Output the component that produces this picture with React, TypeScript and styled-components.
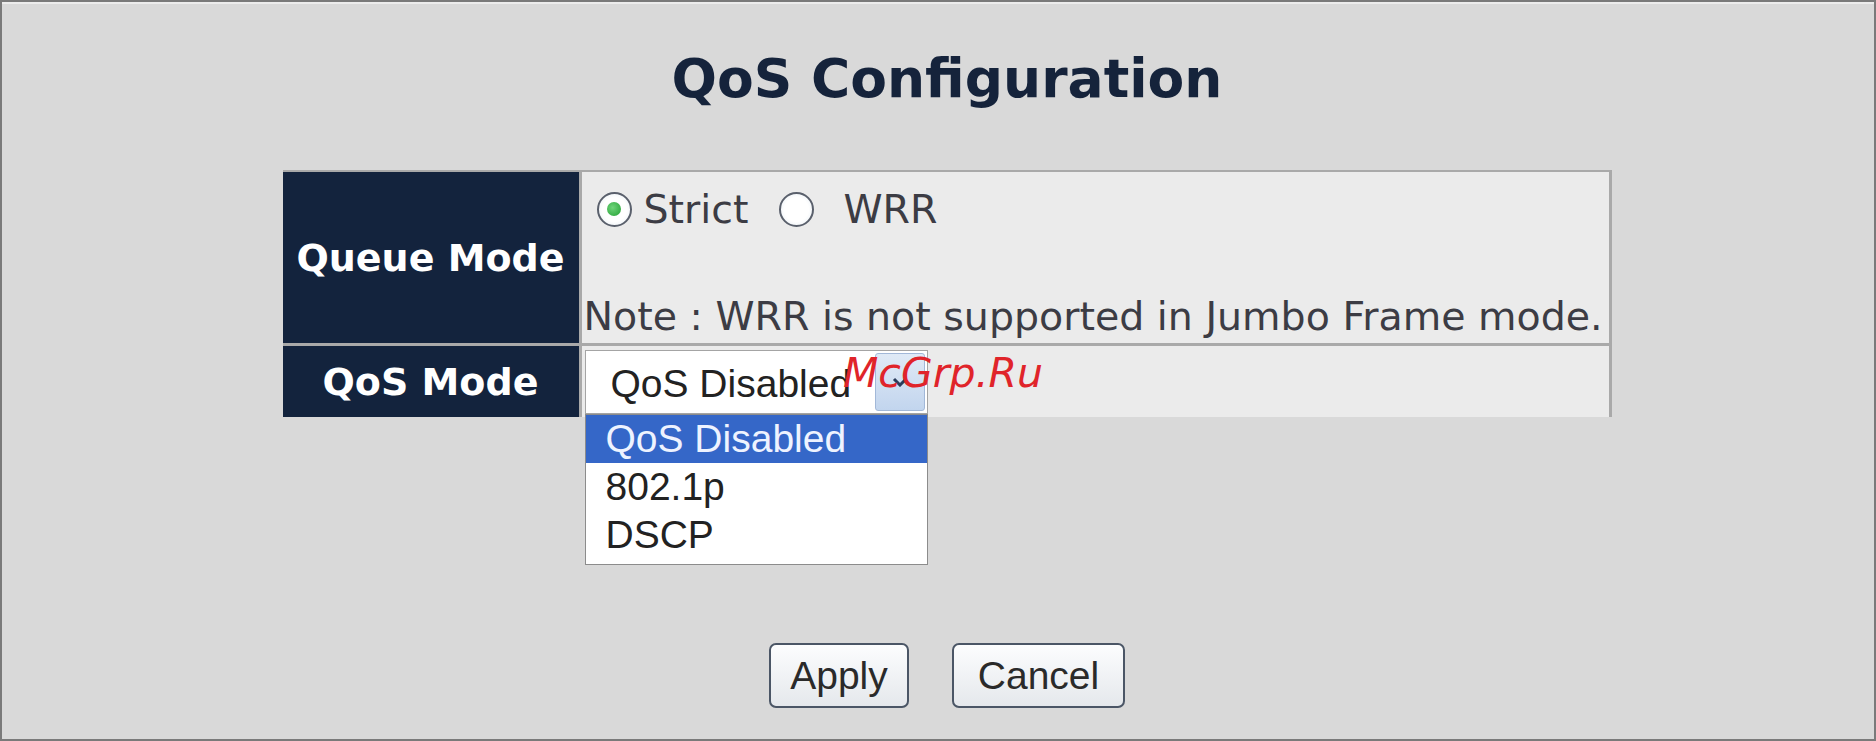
import React from 'react';
import styled, { createGlobalStyle } from 'styled-components';

const GlobalStyle = createGlobalStyle`
  html, body {
    margin: 0;
    padding: 0;
    background: #d9d9d9;
  }
`;

type RadioProps = { checked?: boolean };

const Page = styled.div`
  position: relative;
  box-sizing: border-box;
  width: 1876px;
  height: 741px;
  border: 2px solid #7a7a7a;
  box-shadow: inset 0 2px 0 #ececec;
  background: #d9d9d9;
  display: flex;
  flex-direction: column;
  align-items: center;
  padding-left: 18px;
`;

const Title = styled.h1`
  margin: 47px 0 0;
  font-family: 'DejaVu Sans', Verdana, sans-serif;
  font-weight: bold;
  font-size: 53.5px;
  line-height: 60px;
  color: #15233b;
`;

const Table = styled.div`
  margin-top: 61px;
  width: 1329px;
  display: grid;
  grid-template-columns: 296px 1fr;
  grid-template-rows: 171px 71px;
  column-gap: 3px;
  row-gap: 3px;
  padding: 2px 3px 0 0;
  box-sizing: border-box;
  background: #a9a9a9;
`;

const Label = styled.div`
  background: #13233d;
  color: #ffffff;
  font-family: 'DejaVu Sans', Verdana, sans-serif;
  font-weight: bold;
  font-size: 38px;
  display: flex;
  align-items: center;
  justify-content: center;
`;

const Cell = styled.div`
  background: #ebebeb;
  font-family: 'DejaVu Sans', Verdana, sans-serif;
  font-size: 39.5px;
  color: #3c3c44;
  display: flex;
  flex-direction: column;
`;

const ModeCell = styled(Cell)`
  padding: 10px 0 0 2px;
`;

const SelectCell = styled(Cell)`
  padding: 4px 0 0 3px;
`;

const RadioLine = styled.div`
  display: flex;
  align-items: center;
  height: 54px;
  padding-left: 13px;
`;

const Radio = styled.span<RadioProps>`
  box-sizing: border-box;
  width: 35px;
  height: 35px;
  border-radius: 50%;
  border: 2px solid #5a606c;
  background: radial-gradient(circle, #ffffff 55%, #e2eaf1 100%);
  display: flex;
  align-items: center;
  justify-content: center;
  &::after {
    content: '';
    display: ${({ checked }) => (checked ? 'block' : 'none')};
    width: 14px;
    height: 14px;
    border-radius: 50%;
    background: radial-gradient(circle at 40% 40%, #6fd47a, #22a033);
  }
`;

const RadioText = styled.span<{ gap: number; after: number }>`
  margin-left: ${({ gap }) => gap}px;
  margin-right: ${({ after }) => after}px;
  line-height: 54px;
`;

const Note = styled.div`
  margin-top: auto;
  line-height: 54px;
  white-space: nowrap;
`;

const SelectWrap = styled.div`
  position: relative;
  width: 343px;
`;

const SelectBox = styled.div`
  box-sizing: border-box;
  height: 64px;
  border: 1px solid #a4a4a4;
  background: #ffffff;
  display: flex;
  align-items: center;
  padding: 4px 2px 0 25px;
  font-family: 'Liberation Sans', Arial, sans-serif;
  font-size: 39px;
  color: #222222;
`;

const ArrowButton = styled.span`
  margin-left: auto;
  box-sizing: border-box;
  width: 50px;
  height: 58px;
  margin-top: -4px;
  border: 1px solid #a2b8d8;
  border-radius: 3px;
  background: linear-gradient(#e0eaf6, #c2d5ee);
  display: flex;
  align-items: center;
  justify-content: center;
`;

const List = styled.div`
  position: absolute;
  top: 100%;
  left: 0;
  width: 100%;
  box-sizing: border-box;
  border: 1px solid #8c8c8c;
  background: #ffffff;
  padding-bottom: 5px;
  z-index: 2;
`;

const Option = styled.div<{ selected?: boolean }>`
  height: 48px;
  line-height: 48px;
  padding-left: 20px;
  font-family: 'Liberation Sans', Arial, sans-serif;
  font-size: 39px;
  background: ${({ selected }) => (selected ? '#3567c8' : 'transparent')};
  color: ${({ selected }) => (selected ? '#eef3ff' : '#222222')};
`;

const Buttons = styled.div`
  margin-top: 226px;
  display: flex;
  gap: 43px;
`;

const Button = styled.button<{ w: number }>`
  box-sizing: border-box;
  width: ${({ w }) => w}px;
  height: 65px;
  border: 2px solid #4b5666;
  border-radius: 7px;
  background: linear-gradient(#fcfdfe, #e5e8ec);
  font-family: 'Liberation Sans', Arial, sans-serif;
  font-size: 39px;
  color: #2a2a2a;
  padding: 0;
`;

const Watermark = styled.span`
  position: absolute;
  left: 841px;
  top: 351px;
  font-family: 'DejaVu Sans', sans-serif;
  font-style: italic;
  font-size: 41px;
  line-height: 41px;
  color: #e0242a;
  z-index: 3;
`;

export default function App() {
  return (
    <>
      <GlobalStyle />
      <Page>
        <Title>QoS Configuration</Title>
        <Table>
          <Label>Queue Mode</Label>
          <ModeCell>
            <RadioLine>
              <Radio checked />
              <RadioText gap={12} after={31}>Strict</RadioText>
              <Radio />
              <RadioText gap={29} after={0}>WRR</RadioText>
            </RadioLine>
            <Note>Note : WRR is not supported in Jumbo Frame mode.</Note>
          </ModeCell>
          <Label>QoS Mode</Label>
          <SelectCell>
            <SelectWrap>
              <SelectBox>
                QoS Disabled
                <ArrowButton>
                  <svg width="16" height="10" viewBox="0 0 16 10">
                    <path d="M2 2 L8 8 L14 2" fill="none" stroke="#2c3d5c" strokeWidth="3" />
                  </svg>
                </ArrowButton>
              </SelectBox>
              <List>
                <Option selected>QoS Disabled</Option>
                <Option>802.1p</Option>
                <Option>DSCP</Option>
              </List>
            </SelectWrap>
          </SelectCell>
        </Table>
        <Buttons>
          <Button w={140}>Apply</Button>
          <Button w={173}>Cancel</Button>
        </Buttons>
        <Watermark>McGrp.Ru</Watermark>
      </Page>
    </>
  );
}
